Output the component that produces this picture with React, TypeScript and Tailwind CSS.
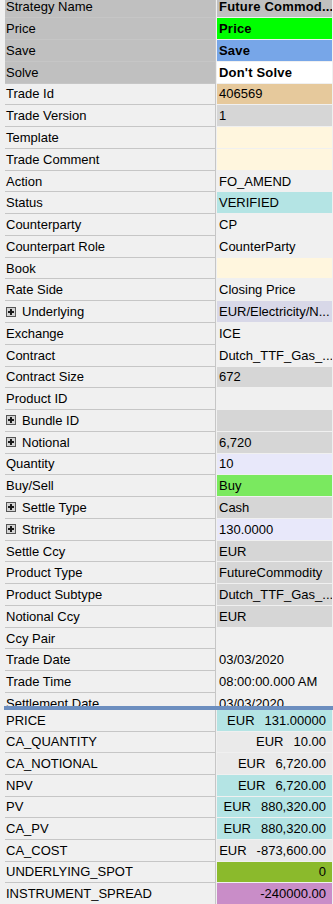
type Field = {
  label: string;
  value?: string;
  labelBg?: string;
  valueBg?: string;
  bold?: boolean;
  plus?: boolean;
};

type Measure = {
  label: string;
  ccy?: string;
  amount: string;
  valueBg?: string;
};

const fields: Field[] = [
  { label: "Strategy Name", value: "Future Commod...", labelBg: "bg-[#c0c0c0]", valueBg: "bg-[#c0c0c0]", bold: true },
  { label: "Price", value: "Price", labelBg: "bg-[#c0c0c0]", valueBg: "bg-[#00ff00]", bold: true },
  { label: "Save", value: "Save", labelBg: "bg-[#c0c0c0]", valueBg: "bg-[#77a6e8]", bold: true },
  { label: "Solve", value: "Don't Solve", labelBg: "bg-[#c0c0c0]", valueBg: "bg-white", bold: true },
  { label: "Trade Id", value: "406569", valueBg: "bg-[#e6c99c]" },
  { label: "Trade Version", value: "1", valueBg: "bg-[#d6d6d6]" },
  { label: "Template", valueBg: "bg-[#fff6de]" },
  { label: "Trade Comment", valueBg: "bg-[#fff6de]" },
  { label: "Action", value: "FO_AMEND" },
  { label: "Status", value: "VERIFIED", valueBg: "bg-[#b4e4e4]" },
  { label: "Counterparty", value: "CP" },
  { label: "Counterpart Role", value: "CounterParty" },
  { label: "Book", valueBg: "bg-[#fff6de]" },
  { label: "Rate Side", value: "Closing Price" },
  { label: "Underlying", value: "EUR/Electricity/N...", valueBg: "bg-[#d8d8e8]", plus: true },
  { label: "Exchange", value: "ICE" },
  { label: "Contract", value: "Dutch_TTF_Gas_..." },
  { label: "Contract Size", value: "672", valueBg: "bg-[#d6d6d6]" },
  { label: "Product ID" },
  { label: "Bundle ID", valueBg: "bg-[#d6d6d6]", plus: true },
  { label: "Notional", value: "6,720", valueBg: "bg-[#d6d6d6]", plus: true },
  { label: "Quantity", value: "10", valueBg: "bg-[#e8e8fa]" },
  { label: "Buy/Sell", value: "Buy", valueBg: "bg-[#7ae95f]" },
  { label: "Settle Type", value: "Cash", valueBg: "bg-[#d6d6d6]", plus: true },
  { label: "Strike", value: "130.0000", valueBg: "bg-[#e8e8fa]", plus: true },
  { label: "Settle Ccy", value: "EUR", valueBg: "bg-[#d6d6d6]" },
  { label: "Product Type", value: "FutureCommodity", valueBg: "bg-[#d6d6d6]" },
  { label: "Product Subtype", value: "Dutch_TTF_Gas_...", valueBg: "bg-[#d6d6d6]" },
  { label: "Notional Ccy", value: "EUR", valueBg: "bg-[#d6d6d6]" },
  { label: "Ccy Pair" },
  { label: "Trade Date", value: "03/03/2020" },
  { label: "Trade Time", value: "08:00:00.000 AM" },
  { label: "Settlement Date", value: "03/03/2020" },
];

const measures: Measure[] = [
  { label: "PRICE", ccy: "EUR", amount: "131.00000", valueBg: "bg-[#b4e4e4]" },
  { label: "CA_QUANTITY", ccy: "EUR", amount: "10.00" },
  { label: "CA_NOTIONAL", ccy: "EUR", amount: "6,720.00" },
  { label: "NPV", ccy: "EUR", amount: "6,720.00", valueBg: "bg-[#b4e4e4]" },
  { label: "PV", ccy: "EUR", amount: "880,320.00", valueBg: "bg-[#b4e4e4]" },
  { label: "CA_PV", ccy: "EUR", amount: "880,320.00", valueBg: "bg-[#b4e4e4]" },
  { label: "CA_COST", ccy: "EUR", amount: "-873,600.00" },
  { label: "UNDERLYING_SPOT", amount: "0", valueBg: "bg-[#8bba2c]" },
  { label: "INSTRUMENT_SPREAD", amount: "-240000.00", valueBg: "bg-[#c98dc8]" },
];

const PlusBox = () => (
  <svg width="10" height="10" viewBox="0 0 10 10" className="mr-[6px] shrink-0">
    <rect x="0.5" y="0.5" width="9" height="9" fill="#d4d4d4" stroke="#555555" />
    <rect x="2" y="4" width="6" height="2" fill="#1a1a1a" />
    <rect x="4" y="2" width="2" height="6" fill="#1a1a1a" />
  </svg>
);

const FieldRow = ({ f }: { f: Field }) => (
  <div className="flex h-[21.77px]">
    <div className={`flex w-[210px] items-center border-b border-[#c6c6c6] pl-[1px] ${f.labelBg ?? ""}`}>
      {f.plus && <PlusBox />}
      <span className="whitespace-nowrap">{f.label}</span>
    </div>
    <div className="w-px bg-[#c6c6c6]" />
    <div className="w-px" />
    <div
      className={`flex w-[115px] items-center overflow-hidden border-b border-[#f0f0f0] pl-[2px] whitespace-nowrap ${f.valueBg ?? ""} ${f.bold ? "font-bold tracking-[0.2px]" : ""}`}
    >
      {f.value}
    </div>
  </div>
);

const MeasureRow = ({ m }: { m: Measure }) => (
  <div className="flex h-[21.67px]">
    <div className="flex w-[210px] items-center border-b border-[#c6c6c6] pl-[1px]">
      <span className="whitespace-nowrap">{m.label}</span>
    </div>
    <div className="w-px bg-[#c6c6c6]" />
    <div className="w-px" />
    <div
      className={`flex w-[115px] items-center justify-end border-b border-[#f0f0f0] pr-[6px] whitespace-nowrap ${m.valueBg ?? "bg-[#eaeaea]"}`}
    >
      {m.ccy && <span>{m.ccy}</span>}
      <span className={m.ccy ? "ml-[10px]" : ""}>{m.amount}</span>
    </div>
  </div>
);

export default function App() {
  return (
    <div className="h-[904px] w-[333px] overflow-hidden bg-[#f0f0f0] font-['Liberation_Sans',Arial,sans-serif] text-[13px] leading-none text-black">
      <div className="h-[706px] overflow-hidden pl-[5px]">
        <div className="-mt-[3.5px]">
          {fields.map((f) => (
            <FieldRow key={f.label} f={f} />
          ))}
        </div>
      </div>
      <div className="ml-[4px] h-[4px] bg-[#6c8ebf]" />
      <div className="pl-[5px]">
        {measures.map((m) => (
          <MeasureRow key={m.label} m={m} />
        ))}
      </div>
    </div>
  );
}
